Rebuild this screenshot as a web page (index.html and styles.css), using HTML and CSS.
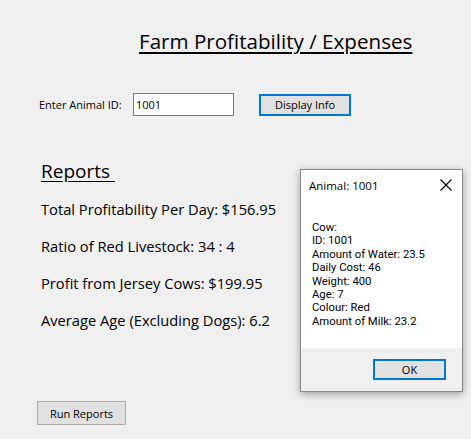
FILE: index.html
```html
<!DOCTYPE html>
<html>
<head>
<meta charset="utf-8">
<link rel="stylesheet" href="styles.css">
</head>
<body>
<div class="form">
  <h1 class="title"><span>Farm Profitability / Expenses</span></h1>
  <div class="id-row">
    <label class="id-label" for="aid">Enter Animal ID:</label>
    <input id="aid" class="id-input" type="text" value="1001">
    <button class="btn btn-focus display-btn">Display Info</button>
  </div>
  <section class="reports">
    <h2 class="reports-title">Reports&nbsp;</h2>
    <p class="report-line">Total Profitability Per Day: $156.95</p>
    <p class="report-line">Ratio of Red Livestock: 34 : 4</p>
    <p class="report-line">Profit from Jersey Cows: $199.95</p>
    <p class="report-line">Average Age (Excluding Dogs): 6.2</p>
  </section>
  <button class="btn run-btn">Run Reports</button>

  <div class="dialog">
    <div class="dialog-head">
      <span class="dialog-title">Animal: 1001</span>
      <svg class="close" width="12" height="12" viewBox="0 0 12 12"><path d="M0.5 0.5 L11.5 11.5 M11.5 0.5 L0.5 11.5" stroke="#000" stroke-width="1.1" fill="none"/></svg>
    </div>
    <div class="dialog-body">
      <div>Cow:</div>
      <div>ID: 1001</div>
      <div>Amount of Water: 23.5</div>
      <div>Daily Cost: 46</div>
      <div>Weight: 400</div>
      <div>Age: 7</div>
      <div>Colour: Red</div>
      <div>Amount of Milk: 23.2</div>
    </div>
    <div class="dialog-foot">
      <button class="btn btn-focus ok-btn">OK</button>
    </div>
  </div>
</div>
</body>
</html>
```
FILE: styles.css
```css
html, body {
  margin: 0;
  padding: 0;
  background: #f0f0f0;
}
body {
  font-family: "Open Sans", "Noto Sans", "DejaVu Sans", sans-serif;
  color: #000;
  width: 471px;
  height: 439px;
  overflow: hidden;
}
.form {
  position: relative;
  width: 471px;
  height: 439px;
}
.title {
  margin: 0;
  padding: 27px 0 0 139px;
  font-size: 20.6px;
  font-weight: normal;
  line-height: 28px;
  height: 28px;
}
.title span {
  text-decoration: underline;
  text-underline-offset: 3px;
}
.id-row {
  display: flex;
  align-items: center;
  margin-top: 38px;
  padding-left: 39px;
  height: 23px;
}
.id-label {
  font-size: 11px;
  width: 94px;
}
.id-input {
  box-sizing: border-box;
  width: 101px;
  height: 23px;
  border: 1px solid #7a7a7a;
  background: #fff;
  font-family: inherit;
  font-size: 11px;
  padding: 0 0 0 2px;
  margin: 0;
  outline: none;
}
.btn {
  box-sizing: border-box;
  background: #e1e1e1;
  border: 1px solid #adadad;
  font-family: inherit;
  font-size: 11px;
  color: #000;
  padding: 0;
  margin: 0;
}
.btn-focus {
  border: 2px solid #0078d7;
}
.display-btn {
  width: 92px;
  height: 22px;
  margin-left: 25px;
}
.reports {
  margin-top: 42px;
  padding-left: 41px;
}
.reports-title {
  margin: 0;
  font-size: 19px;
  font-weight: normal;
  line-height: 26px;
  text-decoration: underline;
  text-underline-offset: 3px;
}
.report-line {
  margin: 0;
  font-size: 14.7px;
  line-height: 20px;
  margin-top: 15px;
}
.report-line + .report-line {
  margin-top: 17px;
}
.run-btn {
  display: block;
  width: 89px;
  height: 24px;
  margin: 71px 0 0 37px;
}
.dialog {
  position: absolute;
  left: 300px;
  top: 169px;
  width: 163px;
  height: 223px;
  box-sizing: border-box;
  border: 1px solid #888;
  background: #fff;
  box-shadow: 0 2px 8px rgba(0,0,0,0.35);
  display: flex;
  flex-direction: column;
}
.dialog-head {
  display: flex;
  justify-content: space-between;
  align-items: center;
  height: 30px;
  padding: 0 10px 0 8px;
}
.dialog-title {
  font-size: 11.5px;
}
.close {
  display: block;
}
.dialog-body {
  flex: 1;
  padding: 21px 0 0 11px;
  font-family: Roboto, "Open Sans", sans-serif;
  font-size: 11.3px;
  line-height: 13.4px;
}
.dialog-foot {
  height: 43px;
  background: #f0f0f0;
  display: flex;
  justify-content: flex-end;
  align-items: center;
  padding-right: 16px;
}
.ok-btn {
  width: 73px;
  height: 21px;
}
```
